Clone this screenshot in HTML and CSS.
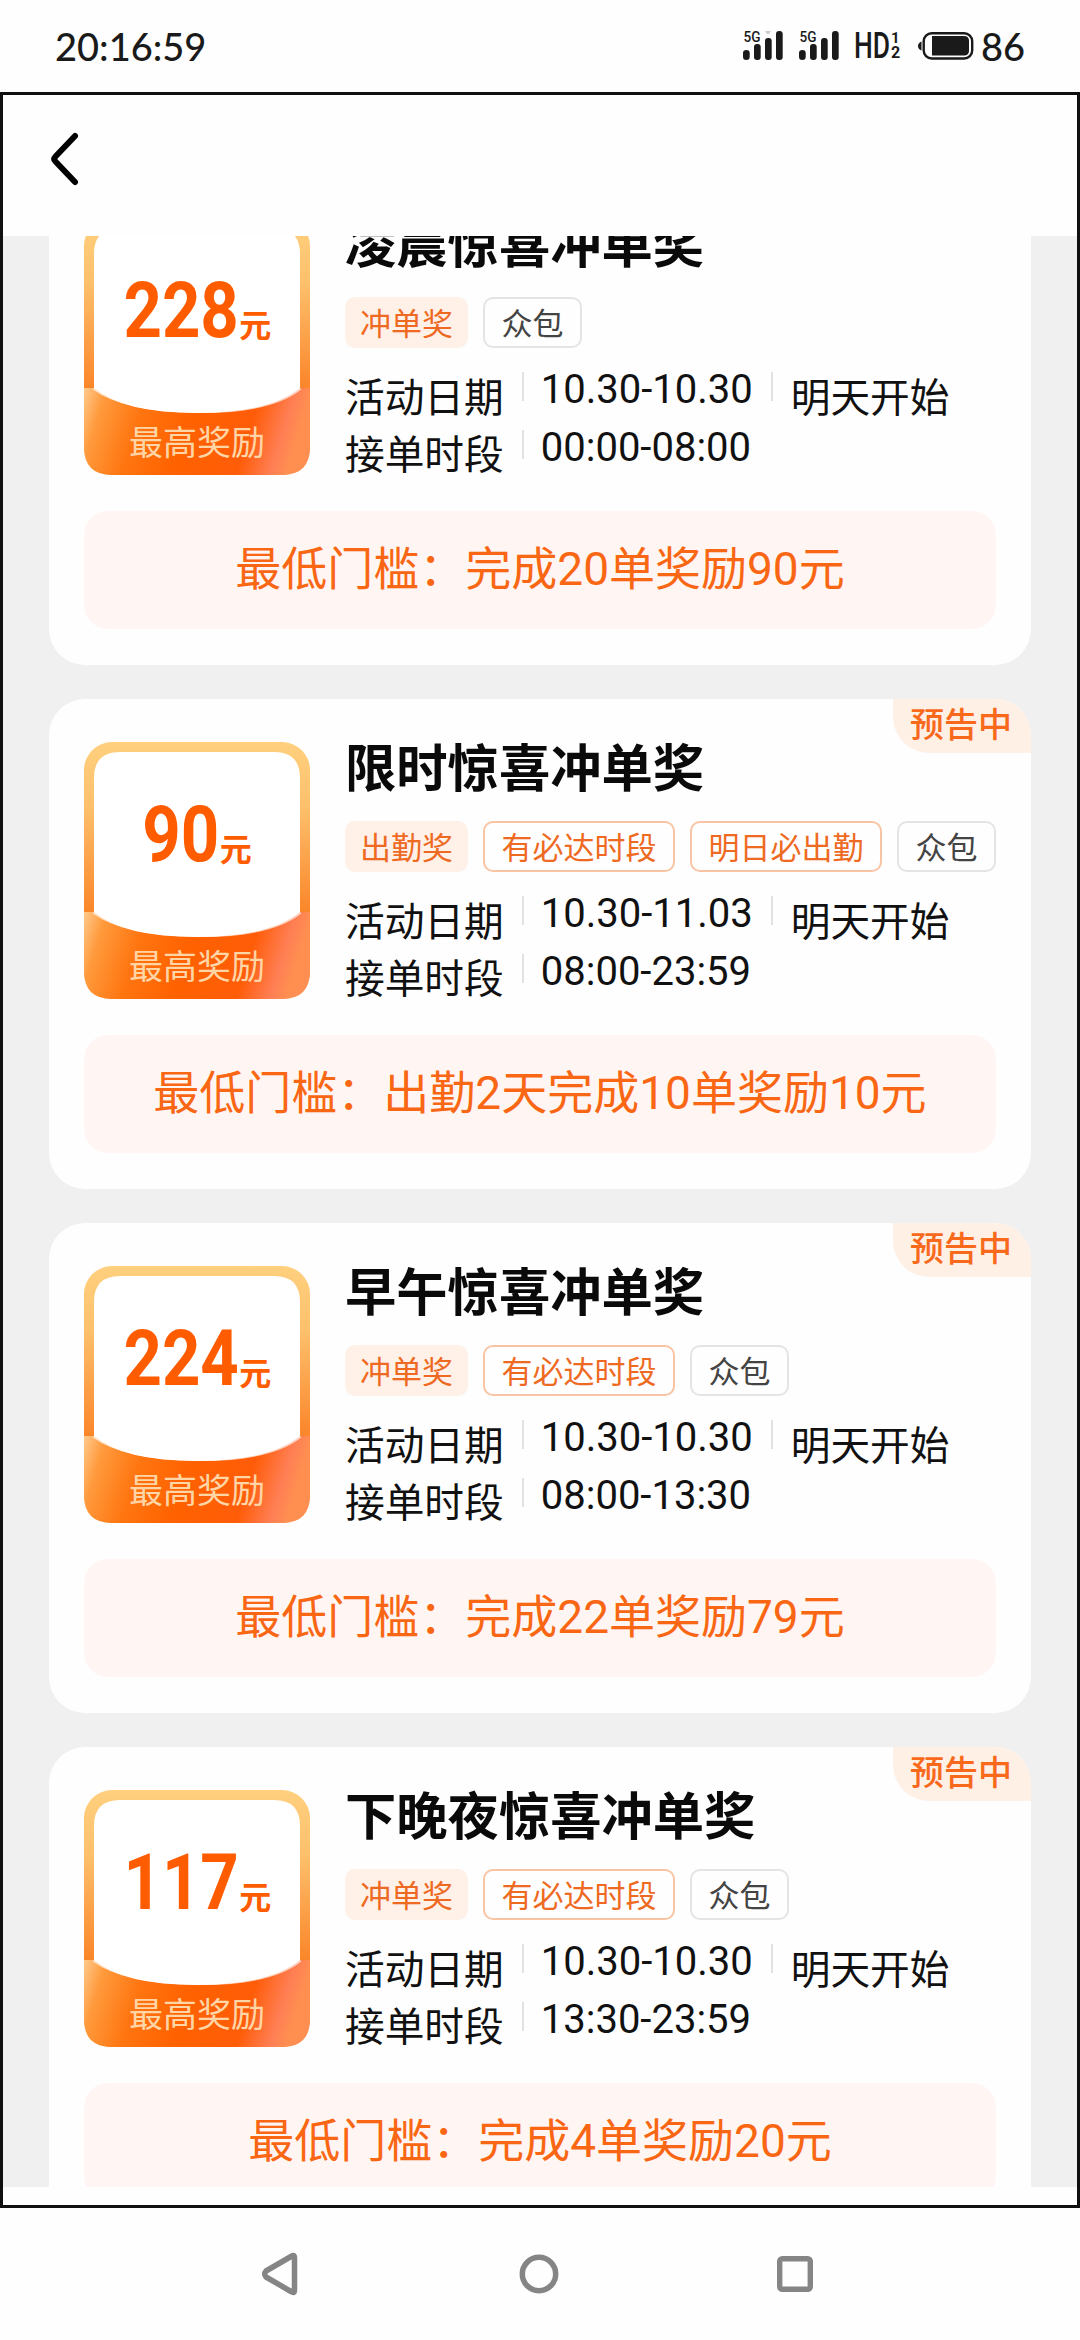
FILE: index.html
```html
<!DOCTYPE html>
<html lang="zh-CN">
<head>
<meta charset="utf-8">
<title>冲单奖</title>
<link rel="stylesheet" href="styles.css">
</head>
<body>
<svg class="defs" width="0" height="0" aria-hidden="true">
  <defs>
    <linearGradient id="frame" x1="0" y1="0" x2="0" y2="1">
      <stop offset="0" stop-color="#ffd07e"/><stop offset=".25" stop-color="#fdc06c"/><stop offset=".7" stop-color="#fa8024"/>
    </linearGradient>
    <linearGradient id="ribbon" x1="0" y1="0" x2="1" y2="0.12">
      <stop offset="0" stop-color="#ffc98c"/><stop offset=".1" stop-color="#ff9a3c"/><stop offset=".28" stop-color="#ff7510"/><stop offset=".5" stop-color="#ff6200"/><stop offset=".78" stop-color="#ff5c08"/><stop offset=".93" stop-color="#ff7f55"/><stop offset="1" stop-color="#ff8f50"/>
    </linearGradient>
    <symbol id="badge" viewBox="0 0 226 257">
      <rect width="226" height="257" rx="28" fill="url(#frame)"/>
      <path d="M10 36Q10 10 36 10H190Q216 10 216 36V200H10Z" fill="#fff"/>
      <path d="M0 170H10Q40 195 113 195T216 170H226V229Q226 257 198 257H28Q0 257 0 229Z" fill="url(#ribbon)"/>
      <path d="M10 170Q40 192 113 193T216 170" fill="none" stroke="#fff" stroke-width="4" opacity=".65"/>
    </symbol>
    <symbol id="signal" viewBox="0 0 42 32">
      <rect x="0" y="20" width="6.7" height="10" rx="3.3"/><rect x="11" y="14" width="6.7" height="16" rx="3"/><rect x="22" y="8" width="6.7" height="22" rx="3"/><rect x="33" y="1" width="6.7" height="29" rx="3"/>
      <text x="0.5" y="11.7" font-size="14" font-weight="500" textLength="17" lengthAdjust="spacingAndGlyphs">5G</text>
    </symbol>
  </defs>
</svg>

<header class="status">
  <span class="clock">20:16:59</span>
  <div class="indicators">
    <svg class="sig" width="42" height="32"><use href="#signal"/><path d="M22 1h6l-2 3h-2z" fill="#ccc"/></svg>
    <svg class="sig" width="42" height="32"><use href="#signal"/></svg>
    <svg class="hd" width="46" height="30" viewBox="0 0 46 30">
      <text x="-1" y="28" font-size="36" font-weight="500" textLength="36" lengthAdjust="spacingAndGlyphs">HD</text>
      <text x="36" y="13" font-size="15" font-weight="700">1</text>
      <text x="36" y="28" font-size="16" font-weight="700">2</text>
    </svg>
    <svg class="battery" width="56" height="28" viewBox="0 0 56 28">
      <path d="M3.5 9.5V18.5Q0 17 0 14T3.5 9.5Z"/>
      <rect x="5.7" y="1.3" width="48.5" height="25.2" rx="8" fill="none" stroke="#1a1a1a" stroke-width="2.4"/>
      <path d="M14 4H46Q51 4 51 9V18.5Q51 23.5 46 23.5H14Z"/>
    </svg>
    <span class="percent">86</span>
  </div>
</header>

<main class="app">
  <nav class="topbar">
    <svg width="34" height="60" viewBox="0 0 34 60"><path d="M27 7 7.500 27.500Q5 30 7.500 32.500L27 53" fill="none" stroke="#000" stroke-width="6" stroke-linecap="round"/></svg>
  </nav>
  <section class="list">

    <article class="card">
      <div class="summary">
        <div class="prize"><svg class="art"><use href="#badge"/></svg>
          <div class="amount"><b class="n3">228</b><i>元</i></div><div class="caption">最高奖励</div></div>
        <div class="info">
          <h2>凌晨惊喜冲单奖</h2>
          <div class="tags"><span class="tag fill">冲单奖</span><span class="tag">众包</span></div>
          <div class="row"><span class="k">活动日期</span><span class="v">10.30-10.30</span><span class="k start">明天开始</span></div>
          <div class="row"><span class="k">接单时段</span><span class="v">00:00-08:00</span></div>
        </div>
      </div>
      <p class="goal">最低门槛：完成20单奖励90元</p>
    </article>

    <article class="card">
      <span class="state">预告中</span>
      <div class="summary">
        <div class="prize"><svg class="art"><use href="#badge"/></svg>
          <div class="amount"><b class="n2">90</b><i>元</i></div><div class="caption">最高奖励</div></div>
        <div class="info">
          <h2>限时惊喜冲单奖</h2>
          <div class="tags"><span class="tag fill">出勤奖</span><span class="tag line">有必达时段</span><span class="tag line">明日必出勤</span><span class="tag">众包</span></div>
          <div class="row"><span class="k">活动日期</span><span class="v">10.30-11.03</span><span class="k start">明天开始</span></div>
          <div class="row"><span class="k">接单时段</span><span class="v">08:00-23:59</span></div>
        </div>
      </div>
      <p class="goal">最低门槛：出勤2天完成10单奖励10元</p>
    </article>

    <article class="card">
      <span class="state">预告中</span>
      <div class="summary">
        <div class="prize"><svg class="art"><use href="#badge"/></svg>
          <div class="amount"><b class="n3">224</b><i>元</i></div><div class="caption">最高奖励</div></div>
        <div class="info">
          <h2>早午惊喜冲单奖</h2>
          <div class="tags"><span class="tag fill">冲单奖</span><span class="tag line">有必达时段</span><span class="tag">众包</span></div>
          <div class="row"><span class="k">活动日期</span><span class="v">10.30-10.30</span><span class="k start">明天开始</span></div>
          <div class="row"><span class="k">接单时段</span><span class="v">08:00-13:30</span></div>
        </div>
      </div>
      <p class="goal">最低门槛：完成22单奖励79元</p>
    </article>

    <article class="card">
      <span class="state">预告中</span>
      <div class="summary">
        <div class="prize"><svg class="art"><use href="#badge"/></svg>
          <div class="amount"><b class="n3">117</b><i>元</i></div><div class="caption">最高奖励</div></div>
        <div class="info">
          <h2>下晚夜惊喜冲单奖</h2>
          <div class="tags"><span class="tag fill">冲单奖</span><span class="tag line">有必达时段</span><span class="tag">众包</span></div>
          <div class="row"><span class="k">活动日期</span><span class="v">10.30-10.30</span><span class="k start">明天开始</span></div>
          <div class="row"><span class="k">接单时段</span><span class="v">13:30-23:59</span></div>
        </div>
      </div>
      <p class="goal">最低门槛：完成4单奖励20元</p>
    </article>

  </section>
</main>

<footer class="sysnav">
  <svg width="40" height="46" viewBox="0 0 40 46"><path d="M30 5.500Q33.500 3 33.500 7V39Q33.500 43 30 40.500L5 26Q2.500 23 5 20Z" fill="none" stroke="#858585" stroke-width="5.500" stroke-linejoin="round"/></svg>
  <svg width="40" height="40" viewBox="0 0 40 40"><circle cx="20" cy="20" r="16.700" fill="none" stroke="#858585" stroke-width="5.500"/></svg>
  <svg width="36" height="36" viewBox="0 0 36 36"><rect x="2.700" y="2.700" width="30.600" height="30.600" rx="2.500" fill="none" stroke="#858585" stroke-width="5.400"/></svg>
</footer>
</body>
</html>
```
FILE: styles.css
```css
* { box-sizing: border-box; margin: 0; padding: 0; }
body {
  width: 1080px; height: 2340px; overflow: hidden;
  display: flex; flex-direction: column;
  background: #fefefe; color: #111;
  font-family: "Noto Sans CJK SC", "Noto Sans", sans-serif;
}
svg { display: block; flex: none; }
.defs { position: absolute; }

.status { height: 92px; flex: none; display: flex; justify-content: space-between; padding: 0 55px; color: #1a1a1a; }
.clock, .percent { font: 500 38px/92px Lato, sans-serif; }
.clock { letter-spacing: 0; }
.indicators { display: flex; align-items: flex-start; fill: #1a1a1a; font-family: Roboto, sans-serif; }
.sig { margin: 30px 14px 0 0; }
.hd { margin: 30px 17px 0 0; }
.battery { margin: 32px 7px 0 0; }

.app { height: 2116px; flex: none; border: 3px solid #101010; background: #fefefe; padding-bottom: 18px; display: flex; flex-direction: column; }
.topbar { height: 141px; flex: none; padding: 34px 45px; }
.list { flex: 1; min-height: 0; overflow: hidden; background: #f0f0f0; padding: 0 46px; }
.list .card:first-child { margin-top: -61px; }

.card { position: relative; height: 490px; margin-bottom: 34px; padding: 43px 35px 0 35px; border-radius: 36px; background: #fefefe; overflow: hidden; }
.state {
  position: absolute; top: 0; right: 0; width: 138px; height: 54px; padding-left: 17px;
  border-bottom-left-radius: 36px; background: #fff0e6; color: #f8691c;
  font-size: 34px; font-weight: 500; line-height: 48px;
}
.summary { display: flex; height: 293px; align-items: flex-start; }

.prize { position: relative; width: 226px; height: 257px; flex: none; text-align: center; }
.art { position: absolute; inset: 0; width: 226px; height: 257px; }
.amount { position: relative; display: flex; justify-content: center; align-items: baseline; height: 205px; padding-top: 48px; color: #ff5c00; }
.amount b { font: 700 78px/90px Roboto, sans-serif; transform: scaleX(.86); }
.amount .n3 { margin: 0 -9px; }
.amount .n2 { margin: 0 -6px; }
.amount i { font-style: normal; font-weight: 700; font-size: 32px; line-height: 40px; }
.caption { position: relative; font-size: 34px; line-height: 36px; color: #ffd5a6; }

.info { margin: -7px -10px 0 35px; }
h2 { font-size: 51.3px; line-height: 60px; font-weight: 700; color: #0a0a0a; white-space: nowrap; }
.tags { display: flex; gap: 15px; margin: 26px 0 22px; }
.tag { height: 51px; padding: 0 16.500px; border: 2px solid #e4e4e4; border-radius: 10px; font-size: 31px; line-height: 46px; color: #444; white-space: nowrap; }
.tag.fill { padding: 0 13px; border-color: #fff0e8; background: #fff0e8; color: #ee6a22; }
.tag.line { border-color: #f9c4a4; color: #ee6a22; }
.row { display: flex; align-items: flex-start; height: 57.500px; }
.k { padding-top: 4.500px; font-size: 39.700px; line-height: 40px; white-space: nowrap; }
.v { position: relative; margin-left: 37px; font: 400 40px/40px Roboto, sans-serif; }
.v::before { content: ""; position: absolute; left: -19px; top: 2px; width: 2px; height: 29px; background: #e2e2e2; }
.start { position: relative; margin-left: 38px; }
.start::before { content: ""; position: absolute; left: -20px; top: 2px; width: 2px; height: 29px; background: #e2e2e2; }

.goal { height: 118px; border-radius: 24px; background: #fff6f3; color: #fa6714; text-align: center; font: 400 46px/116px Roboto, "Noto Sans CJK SC", sans-serif; white-space: nowrap; }

.sysnav { flex: 1; position: relative; display: flex; align-items: center; justify-content: space-between; padding: 0 267px 0 261px; }
```
